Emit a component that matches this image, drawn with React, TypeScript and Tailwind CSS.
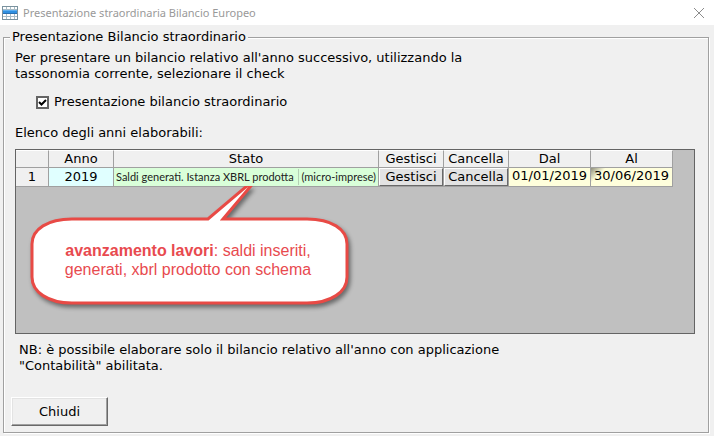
import React from 'react';

const columns = [
  { label: '', width: 'w-[33px]' },
  { label: 'Anno', width: 'w-[65px]' },
  { label: 'Stato', width: 'w-[265px]' },
  { label: 'Gestisci', width: 'w-[65px]' },
  { label: 'Cancella', width: 'w-[65px]' },
  { label: 'Dal', width: 'w-[82px]' },
  { label: 'Al', width: 'w-[82px]' },
];

const rows = [
  {
    anno: '2019',
    stato: 'Saldi generati. Istanza XBRL prodotta',
    schema: '(micro-imprese)',
    dal: '01/01/2019',
    al: '30/06/2019',
  },
];

const GridIcon: React.FC = () => (
  <svg width="16" height="14" viewBox="0 0 16 14" aria-hidden="true" shapeRendering="crispEdges">
    <rect width="16" height="14" fill="#7a929e" />
    <rect x="1" y="1" width="14" height="12" fill="#fff" />
    <path d="M1 3.5h14M1 10.5h14M4.5 1v12M8.5 1v12M12.5 1v12" stroke="#a9bcc6" />
    <rect x="1" y="4" width="14" height="4" fill="#2f8fe0" />
    <path d="M1 4.5h14" stroke="#5badf0" />
    <path d="M1 7.5h14" stroke="#2a6fb0" />
  </svg>
);

const TitleBar: React.FC = () => (
  <header className="flex h-[25px] items-center bg-white pr-[9px] pl-[2px]">
    <GridIcon />
    <h1 className="ml-[5px] flex-1 font-['Noto_Sans',sans-serif] text-[11px] leading-4 text-[#999]">
      Presentazione straordinaria Bilancio Europeo
    </h1>
    <button type="button" aria-label="Chiudi finestra">
      <svg width="12" height="12" viewBox="0 0 12 12" fill="none" stroke="#8c8c8c">
        <path d="M1 1l10 10M11 1L1 11" />
      </svg>
    </button>
  </header>
);

const Callout: React.FC = () => (
  <div className="absolute top-9 left-[14px] h-[124px] w-[324px]">
    <svg
      className="absolute inset-0 drop-shadow-[2px_3px_2px_rgba(0,0,0,0.45)]"
      width="324"
      height="124"
      viewBox="0 1 324 124"
      aria-hidden="true"
    >
      <path
        d="M42 34H178L231 -11L193 34H277C301 34 317 44 317 59V92C317 107 301 118 277 118H42C18 118 2 107 2 92V59C2 44 18 34 42 34Z"
        fill="#fff"
        stroke="#e84a45"
        strokeWidth="3"
      />
    </svg>
    <p className="relative mr-2 pt-[55px] text-center font-['Liberation_Sans',Arial,sans-serif] text-base leading-[19px] text-[#e84a4f]">
      <strong>avanzamento lavori</strong>: saldi inseriti,
      <br />
      generati, xbrl prodotto con schema
    </p>
  </div>
);

const cell = 'border-r border-b border-[#a0a0a0] p-0 text-center font-normal';
const cellButton =
  'block h-[18px] w-full border border-t-white border-r-[#696969] border-b-[#696969] border-l-white bg-[#e3e3e3] leading-4';

const YearsTable: React.FC = () => (
  <div className="relative mt-2 mr-[13px] ml-[11px] h-[185px] border border-[#646464] bg-[#c0c0c0]">
    <table className="table-fixed border-separate border-spacing-0 leading-4">
      <thead>
        <tr className="h-[18px] bg-[#f0f0f0]">
          {columns.map((col) => (
            <th key={col.label} scope="col" className={`${cell} ${col.width} border-t border-t-white`}>
              {col.label}
            </th>
          ))}
        </tr>
      </thead>
      <tbody>
        {rows.map((row, i) => (
          <tr key={row.anno} className="h-[19px]">
            <th scope="row" className={`${cell} bg-[#f0f0f0]`}>{i + 1}</th>
            <td className={`${cell} bg-[#e0ffff]`}>{row.anno}</td>
            <td className={`${cell} bg-[#d9ffd9]`}>
              <div className="flex justify-between px-[2px] font-['Lato',sans-serif] text-[11px] whitespace-nowrap text-[#222]">
                <span>{row.stato}</span>
                <span className="border-l border-[#b5cfb5] pl-[2px]">{row.schema}</span>
              </div>
            </td>
            <td className={cell}>
              <button type="button" className={cellButton}>Gestisci</button>
            </td>
            <td className={cell}>
              <button type="button" className={cellButton}>Cancella</button>
            </td>
            <td className={`${cell} bg-[#ffffdc] align-top`}>{row.dal}</td>
            <td className={`${cell} bg-[#ffffdc] bg-linear-135 from-[#8f8f7c] to-[#ffffdc] to-15% align-top`}>
              {row.al}
            </td>
          </tr>
        ))}
      </tbody>
    </table>
    <Callout />
  </div>
);

const App: React.FC = () => {
  const [straordinario, setStraordinario] = React.useState(true);

  return (
    <div className="min-h-screen bg-[#f0f0f0] font-['DejaVu_Sans',Verdana,sans-serif] text-[13px] leading-4 text-black">
      <TitleBar />
      <main className="pt-1 pr-[5px] pl-[3px]">
        <fieldset className="border border-[#a0a0a0] pb-[6px] shadow-[1px_1px_0_#fff,inset_1px_1px_0_#fff]">
          <legend className="ml-[6px] bg-[#f0f0f0] px-[2px]">Presentazione Bilancio straordinario</legend>
          <p className="ml-[11px] max-w-[480px] pt-[5px]">
            Per presentare un bilancio relativo all'anno successivo, utilizzando la tassonomia corrente, selezionare il
            check
          </p>
          <label className="mt-3 ml-8 flex w-fit items-center gap-[5px]">
            <span className="relative flex">
              <input
                type="checkbox"
                checked={straordinario}
                onChange={(e) => setStraordinario(e.target.checked)}
                className="peer size-[13px] appearance-none border-2 border-[#646464] bg-white"
              />
              <svg
                className="pointer-events-none absolute inset-0 hidden peer-checked:block"
                width="13"
                height="13"
                viewBox="0 0 13 13"
                fill="none"
                stroke="#000"
                strokeWidth="2"
              >
                <path d="M3 6l2.5 2.5L10 4" />
              </svg>
            </span>
            Presentazione bilancio straordinario
          </label>
          <p className="mt-[15px] ml-[11px]">Elenco degli anni elaborabili:</p>
          <YearsTable />
          <p className="mt-2 ml-[15px] max-w-[500px]">
            NB: è possibile elaborare solo il bilancio relativo all'anno con applicazione "Contabilità" abilitata.
          </p>
          <button
            type="button"
            className="mt-[23px] ml-[7px] block h-[29px] w-[97px] border border-t-white border-r-[#696969] border-b-[#696969] border-l-white shadow-[inset_-1px_-1px_0_#a0a0a0,inset_1px_1px_0_#e3e3e3]"
          >
            Chiudi
          </button>
        </fieldset>
      </main>
    </div>
  );
};

export default App;
